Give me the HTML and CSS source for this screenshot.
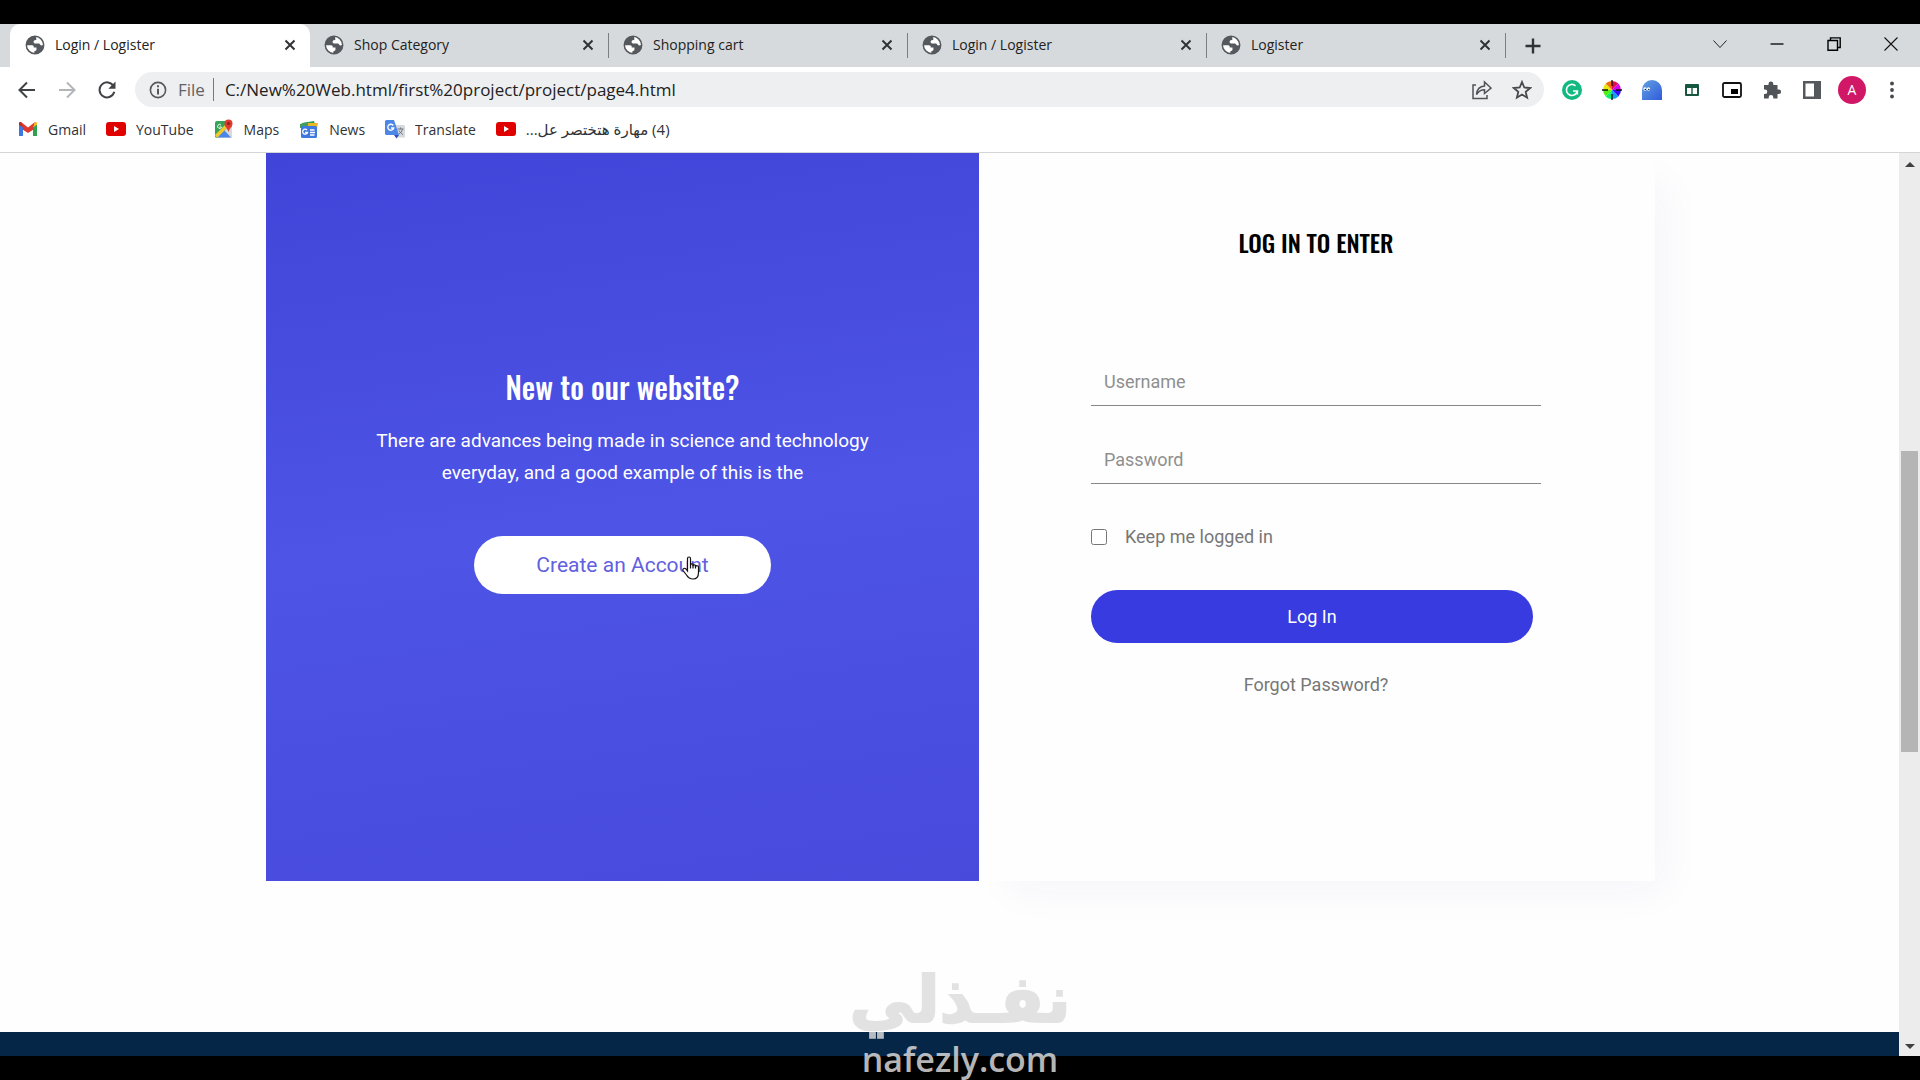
FILE: index.html
```html
<!DOCTYPE html>
<html lang="en">
<head>
    <meta charset="UTF-8">
    <meta name="viewport" content="width=device-width, initial-scale=1.0">
    <title>Login / Logister</title>
    <link rel="stylesheet" href="styles.css">
</head>
<body>
    <!-- shared icon shapes -->
    <svg class="defs" width="0" height="0">
        <symbol id="globe" viewBox="0 0 20 20">
            <circle cx="10" cy="10" r="8.7" fill="#fff" stroke="#55585c" stroke-width="1.5"/>
            <path d="M11 1.3C5.500 0.800 1.200 5 1.300 10.300L7 10.200C8.500 10.300 9 11.400 8.700 12.500L11.500 12.600L11.400 15.200L9.300 16.500L9.200 18.700C14.500 18.900 18.700 15 18.700 10L16 10.600L14.200 8.400L10.500 8.500C8.300 8.300 8 6 9.700 5.200L11.400 4.800Z" fill="#55585c"/>
        </symbol>
        <symbol id="close" viewBox="0 0 12 12">
            <path d="M1.500 1.500L10.500 10.500M10.500 1.500L1.500 10.500" stroke="#303236" stroke-width="2"/>
        </symbol>
        <symbol id="youtube" viewBox="0 0 20 20">
            <rect y="3" width="20" height="14" rx="3" fill="#e00000"/>
            <path d="M8 7L13 10L8 13Z" fill="#fff"/>
        </symbol>
    </svg>

    <div class="window">
        <header class="browser">
            <div class="tab-bar">
                <div class="tab active">
                    <svg class="favicon"><use href="#globe"/></svg>
                    <span>Login / Logister</span>
                    <button class="close" aria-label="Close tab"><svg><use href="#close"/></svg></button>
                </div>
                <div class="tab">
                    <svg class="favicon"><use href="#globe"/></svg>
                    <span>Shop Category</span>
                    <button class="close" aria-label="Close tab"><svg><use href="#close"/></svg></button>
                </div>
                <div class="tab">
                    <svg class="favicon"><use href="#globe"/></svg>
                    <span>Shopping cart</span>
                    <button class="close" aria-label="Close tab"><svg><use href="#close"/></svg></button>
                </div>
                <div class="tab">
                    <svg class="favicon"><use href="#globe"/></svg>
                    <span>Login / Logister</span>
                    <button class="close" aria-label="Close tab"><svg><use href="#close"/></svg></button>
                </div>
                <div class="tab">
                    <svg class="favicon"><use href="#globe"/></svg>
                    <span>Logister</span>
                    <button class="close" aria-label="Close tab"><svg><use href="#close"/></svg></button>
                </div>
                <button class="new-tab" aria-label="New tab">
                    <svg width="16" height="16" viewBox="0 0 16 16"><path d="M8 0.500V15.500M0.500 8H15.500" stroke="#303236" stroke-width="2.4"/></svg>
                </button>
                <div class="window-buttons">
                    <button aria-label="Search tabs"><svg width="14" height="14" viewBox="0 0 14 14"><path d="M0.500 3.500L7 10.500L13.500 3.500" fill="none" stroke="#222"/></svg></button>
                    <button aria-label="Minimize"><svg width="14" height="14" viewBox="0 0 14 14"><path d="M0.500 7H13.500" stroke="#000" stroke-width="1.300"/></svg></button>
                    <button aria-label="Restore"><svg width="14" height="14" viewBox="0 0 14 14"><path d="M1 3.500H10.500V13.300H1ZM3.500 3.500V0.900H13.200V10.500H10.500" fill="none" stroke="#000" stroke-width="1.400"/></svg></button>
                    <button aria-label="Close"><svg width="14" height="14" viewBox="0 0 14 14"><path d="M0.500 0.500L13.500 13.500M13.500 0.500L0.500 13.500" stroke="#111" stroke-width="1.100"/></svg></button>
                </div>
            </div>

            <div class="toolbar">
                <button aria-label="Back"><svg width="18" height="18" viewBox="0 0 18 18"><path d="M17 9H2M9 1.500L1.500 9L9 16.500" fill="none" stroke="#404246" stroke-width="2"/></svg></button>
                <button aria-label="Forward"><svg width="18" height="18" viewBox="0 0 18 18"><path d="M1 9H16M9 1.500L16.500 9L9 16.500" fill="none" stroke="#b3b5b8" stroke-width="2"/></svg></button>
                <button aria-label="Reload"><svg width="18" height="18" viewBox="0 0 18 18"><path d="M15.500 5A7.500 7.500 0 1 0 16.300 10.800" fill="none" stroke="#404246" stroke-width="2"/><path d="M17.500 0.500V7.700H10.300Z" fill="#404246"/></svg></button>
                <div class="omnibox">
                    <svg width="18" height="18" viewBox="0 0 18 18"><circle cx="9" cy="9" r="7.600" fill="none" stroke="#55585c" stroke-width="1.600"/><path d="M9 4.300V6.300M9 7.700V13.500" stroke="#55585c" stroke-width="2"/></svg>
                    <label for="address">File</label>
                    <input type="text" id="address" value="C:/New%20Web.html/first%20project/project/page4.html">
                    <button aria-label="Share"><svg width="20" height="20" viewBox="0 0 20 20"><path d="M4 5H1V18.500H15V15M4.500 14.500C5 9 8 6.300 12.500 6V2L19 8L12.500 13.500V9.800C9 9.800 6.500 11.500 4.500 14.500Z" fill="none" stroke="#505357" stroke-width="1.500"/></svg></button>
                    <button aria-label="Bookmark this tab"><svg width="20" height="20" viewBox="0 0 20 20"><path d="M10 2L12.300 7.500L18.200 8L13.700 11.900L15.100 17.700L10 14.600L4.900 17.700L6.300 11.900L1.800 8L7.700 7.500Z" fill="none" stroke="#46494d" stroke-width="1.800"/></svg></button>
                </div>
                <div class="extensions">
                    <button aria-label="Grammarly"><svg width="20" height="20" viewBox="0 0 20 20"><circle cx="10" cy="10" r="10" fill="#12b981"/><path d="M13.500 5.800A5.500 5.500 0 1 0 15.300 11H11M15.300 11V14.500" fill="none" stroke="#fff" stroke-width="1.700"/></svg></button>
                    <button aria-label="Color picker">
                        <svg width="20" height="20" viewBox="0 0 20 20">
                            <path d="M10 10V1A9 9 0 0 1 16.400 3.600Z" fill="#e0104a"/><path d="M10 10L16.400 3.600A9 9 0 0 1 19 10Z" fill="#d400f0"/>
                            <path d="M10 10H19A9 9 0 0 1 16.400 16.400Z" fill="#3010ff"/><path d="M10 10L16.400 16.400A9 9 0 0 1 10 19Z" fill="#10a0f0"/>
                            <path d="M10 10V19A9 9 0 0 1 3.600 16.400Z" fill="#10f070"/><path d="M10 10L3.600 16.400A9 9 0 0 1 1 10Z" fill="#50f010"/>
                            <path d="M10 10H1A9 9 0 0 1 3.600 3.600Z" fill="#e8e810"/><path d="M10 10L3.600 3.600A9 9 0 0 1 10 1Z" fill="#f07010"/>
                            <path d="M10 0V6M10 14V20M0 10H6M14 10H20" stroke="#111" stroke-width="1.300"/>
                        </svg>
                    </button>
                    <button aria-label="Ghost"><svg width="22" height="20" viewBox="0 0 22 20"><defs><linearGradient id="ghost" x1="0" y1="0" x2="1" y2="1"><stop offset="0" stop-color="#61a2e0"/><stop offset="1" stop-color="#315bdc"/></linearGradient></defs><path d="M1 20V10A10 10 0 0 1 21 10V20Z" fill="url(#ghost)"/><circle cx="4" cy="9" r="1.700" fill="#fff"/><circle cx="7.500" cy="9" r="1.700" fill="#fff"/><circle cx="4.300" cy="9.400" r="0.700"/><circle cx="7.800" cy="9.400" r="0.700"/></svg></button>
                    <button aria-label="Columns"><svg width="14" height="12" viewBox="0 0 14 12"><rect width="14" height="12" rx="1" fill="#17573f"/><path d="M2 4H6.300V10H2ZM7.700 4H12V10H7.700Z" fill="#fff"/></svg></button>
                    <button aria-label="Picture in picture"><svg width="20" height="16" viewBox="0 0 20 16"><rect x="1" y="1" width="18" height="14" rx="1.500" fill="#fff" stroke="#111" stroke-width="1.800"/><rect x="9" y="7" width="7" height="5" fill="#000"/></svg></button>
                    <button aria-label="Extensions"><svg width="20" height="20" viewBox="0 0 20 20"><path d="M2 5H6.500V4A2.400 2.400 0 0 1 11.300 4V5H15.500V9.500H16.800A2.300 2.300 0 0 1 16.800 14.100H15.500V18.500H11.300V17.300A2.300 2.300 0 0 0 6.700 17.300V18.500H2V14H3A2.300 2.300 0 0 0 3 9.400H2Z" fill="#505357"/></svg></button>
                    <button aria-label="Side panel"><svg width="18" height="18" viewBox="0 0 18 18"><path d="M0 0H18V18H0ZM2.500 2.500V15.500H11V2.500Z" fill="#55585c" fill-rule="evenodd"/></svg></button>
                    <button class="avatar">A</button>
                    <button aria-label="Menu"><svg width="4" height="18" viewBox="0 0 4 18"><circle cx="2" cy="2.500" r="1.900" fill="#46494d"/><circle cx="2" cy="9" r="1.900" fill="#46494d"/><circle cx="2" cy="15.500" r="1.900" fill="#46494d"/></svg></button>
                </div>
            </div>

            <nav class="bookmarks">
                <a href="#"><svg viewBox="0 0 20 20"><path d="M1 17V5L5 8V17Z" fill="#3f78e0"/><path d="M15 17V8L19 5V17Z" fill="#2fa24f"/><path d="M1 5.500V3.500L3 3L10 8.500L17 3L15 11L10 14L5 11V8.500Z" fill="#df3a30"/><path d="M15 8.500L17 3L19 3.500V5.500Z" fill="#f5ba15"/><path d="M1 5.500V3.500L3 3L5 8.500Z" fill="#b92b25"/><path d="M5 11L10 14.500L15 11V17H5Z" fill="#fff"/></svg>Gmail</a>
                <a href="#"><svg><use href="#youtube"/></svg>YouTube</a>
                <a href="#"><svg viewBox="0 0 20 20"><rect x="1" y="2" width="17" height="17" rx="2" fill="#35a356"/><path d="M3 19L16 6L18 8V19Z" fill="#d7d9dd"/><path d="M2 18.500L10 11L17 18.500Z" fill="#4a86e8"/><path d="M1 16L12 5L14.500 7.500L3 19Z" fill="#f5c82b"/><path d="M14.500 13C13.500 9 10.500 8 10.500 4.500A4 4 0 0 1 18.500 4.500C18.500 8 15.500 9 14.500 13Z" fill="#df3a30"/><circle cx="14.500" cy="4.500" r="1.500" fill="#8c1f1b"/><path d="M7 6A2 2 0 1 0 7.500 8H5.500" fill="none" stroke="#fff"/></svg>Maps</a>
                <a href="#"><svg viewBox="0 0 20 20"><path d="M3 4L15 2L17 8L4 9Z" fill="#2f9c50"/><path d="M7 4H19L18 10H7Z" fill="#e8b82a"/><path d="M1 5L9 3V9H1Z" fill="#459c61"/><rect x="2" y="7" width="16" height="12" rx="1.500" fill="#3f79df"/><path d="M8 11A2.500 2.500 0 1 0 8.500 13.500H6M11 11H15.500M11 13.500H16M11 16H15.500" fill="none" stroke="#fff" stroke-width="1.300"/></svg>News</a>
                <a href="#"><svg viewBox="0 0 20 20"><path d="M8 6H18.500A1.500 1.500 0 0 1 20 7.500V18.500H11Z" fill="#d5d8dc"/><path d="M1.500 1H9L14 16H1.500A1.500 1.500 0 0 1 0 14.500V2.500A1.500 1.500 0 0 1 1.500 1Z" fill="#4c87e6"/><path d="M9 16H14L11.500 19.500Z" fill="#3250b8"/><path d="M8.300 6.500A3 3 0 1 0 8.700 9H6" fill="none" stroke="#fff" stroke-width="1.400"/><path d="M12.500 10H18.500M15.500 8.500V10M17.500 10C17 12.500 15.500 14 14 15M14 11.500C15 13.500 16.500 14.500 17.800 15.500" fill="none" stroke="#70767d"/></svg>Translate</a>
                <a href="#"><svg><use href="#youtube"/></svg><bdi class="arabic" dir="rtl" lang="ar">(4) مهارة هتختصر عل...</bdi></a>
            </nav>
        </header>

        <div class="viewport">
            <main class="page">
                <section class="login-area">
                    <div class="intro">
                        <h4>New to our website?</h4>
                        <p>There are advances being made in science and technology everyday, and a good example of this is the</p>
                        <a class="create" href="#">Create an Account
                            <svg class="cursor" width="18" height="24" viewBox="0 0 18 24"><path d="M5.500 13V2.500A1.500 1.500 0 0 1 8.500 2.500V9A1.400 1.400 0 0 1 11 8.500V10A1.400 1.400 0 0 1 13.500 9.500V11A1.400 1.400 0 0 1 16.500 11.500V16.500C16.500 20.500 14.500 23 11 23C7.500 23 6 21.500 4.500 19L1 14.500C0.500 12.500 2.500 11.500 4 13L5.500 15Z" fill="#fff" stroke="#111" stroke-width="1.200"/><path d="M8.500 8.500V12.500M11 9V12.500M13.500 10V12.500" stroke="#111" stroke-width="1.200"/></svg>
                        </a>
                    </div>
                    <form class="login-form">
                        <h3>LOG IN TO ENTER</h3>
                        <input type="text" class="field" aria-label="Username" placeholder="Username">
                        <input type="password" class="field" aria-label="Password" placeholder="Password">
                        <div class="keep">
                            <input type="checkbox" id="keep">
                            <label for="keep">Keep me logged in</label>
                        </div>
                        <button type="button" class="submit">Log In</button>
                        <a class="forgot" href="#">Forgot Password?</a>
                    </form>
                </section>
                <footer class="footer"></footer>
            </main>
            <div class="scrollbar">
                <svg width="10" height="5" viewBox="0 0 10 5"><path d="M0 5L5 0L10 5Z" fill="#404040"/></svg>
                <div class="track"><div class="thumb"></div></div>
                <svg width="10" height="5" viewBox="0 0 10 5"><path d="M0 0L5 5L10 0Z" fill="#404040"/></svg>
            </div>
        </div>
    </div>

    <div class="watermark">
        <span class="mark-ar" lang="ar" dir="rtl">نفـذلي</span>
        <span class="mark-en">nafezly.com</span>
    </div>
</body>
</html>
```
FILE: styles.css
```css
* { box-sizing: border-box; }
body { margin: 0; background: #000; font-family: Roboto, sans-serif; color: #222; overflow: hidden; }
button { border: none; background: none; padding: 0; font-family: inherit; cursor: pointer; }
a { text-decoration: none; }
.defs { position: absolute; }

.window { display: flex; flex-direction: column; height: 100vh; padding: 24px 0; }

/* browser chrome */
.browser { background: #fff; border-bottom: 1px solid #d4d5d7; font-family: "Open Sans", "DejaVu Sans", sans-serif; }
.tab-bar { display: flex; align-items: center; height: 43px; padding-left: 10px; background: #d6dadd; }
.tab { display: flex; align-items: center; flex: 0 1 299px; height: 25px; padding: 0 10px 2px 14px; font-size: 14px; border-right: 1px solid #7b7e82; }
.tab.active { flex-basis: 300px; height: 43px; padding-left: 15px; background: #fff; border: none; border-radius: 10px 10px 0 0; }
.favicon { width: 20px; height: 20px; margin-right: 10px; }
.close { display: flex; width: 20px; height: 20px; margin-left: auto; align-items: center; justify-content: center; }
.close svg { width: 12px; height: 12px; }
.new-tab { display: flex; margin-left: 19px; }
.window-buttons { display: flex; gap: 43px; margin-left: auto; padding: 0 22px 4px 0; }
.window-buttons button { display: flex; }

.toolbar { display: flex; align-items: center; height: 45px; padding: 0 14px 0 18px; gap: 22px; }
.toolbar button { display: flex; align-items: center; justify-content: center; }
.omnibox { display: flex; align-items: center; flex: 1; height: 35px; margin: 0 -8px 0 -3px; padding: 0 12px 0 14px; border-radius: 18px; background: #eeeff1; font-size: 17px; }
.omnibox label { margin-left: 11px; padding-right: 8px; border-right: 1px solid #77797d; color: #5f6368; }
.omnibox input { flex: 1; padding: 0 11px; border: none; outline: none; background: none; font: inherit; color: #222; }
.omnibox button { margin-left: 20px; }
.extensions { display: flex; align-items: center; gap: 12px; }
.extensions button { width: 28px; height: 28px; }
.extensions .avatar { border-radius: 50%; background: #d01866; color: #fff; font-size: 14px; }

.bookmarks { display: flex; align-items: center; height: 40px; gap: 20px; padding: 0 18px 6px; }
.bookmarks a { display: flex; align-items: center; gap: 10px; color: #303236; font-size: 14px; }
.bookmarks svg { width: 20px; height: 20px; }
.bookmarks .arabic { font-size: 15px; line-height: 20px; }

/* page */
.viewport { display: flex; flex: 1; min-height: 0; background: #fff; }
.page { display: flex; flex-direction: column; flex: 1; background: #fefefe; overflow: hidden; }
.login-area { display: flex; padding: 0 244px 0 266px; }
.intro { display: flex; flex-direction: column; align-items: center; flex: 1 1 713px; padding: 210px 100px 287px; text-align: center; color: #fff; background: linear-gradient(172deg, #4144d8, #4d54e6 50%, #484adc); }
.intro h4 { margin: 0; font: 500 30px/48px Oswald, "Liberation Sans Narrow", sans-serif; }
.intro p { margin: 14px 0 47px; font-size: 19px; line-height: 32px; }
.create { position: relative; padding: 0 62px; border-radius: 30px; background: #fff; color: #6260df; font-size: 21px; line-height: 58px; }
.cursor { position: absolute; left: 70%; top: 20px; }
.login-form { display: flex; flex-direction: column; flex: 1 1 676px; padding: 69px 114px 0 112px; background: #fefefe; box-shadow: 20px 20px 40px -10px #f5f5fb; clip-path: inset(0 -60px -60px 0); }
.login-form h3 { margin: 0 0 91px; font: 500 24px/40px Oswald, "Liberation Sans Narrow", sans-serif; color: #000; text-align: center; }
.field { height: 53px; margin-bottom: 25px; padding: 4px 13px 0; border: none; border-bottom: 1px solid #888; outline: none; background: none; font: 18px Roboto, sans-serif; }
.field::placeholder { color: #8f8f8f; }
.keep { display: flex; align-items: center; margin-top: 16px; line-height: 24px; color: #777; font-size: 18px; }
.keep input { width: 16px; height: 16px; margin: 0 18px 0 0; }
.submit { height: 53px; margin: 41px 8px 28px 0; border-radius: 27px; background: #373be0; color: #fff; font-size: 18px; }
.forgot { line-height: 28px; text-align: center; color: #777; font-size: 18px; }
.footer { height: 24px; margin-top: auto; background: #052646; }

.scrollbar { display: flex; flex-direction: column; align-items: center; width: 21px; padding: 9px 0 7px; background: #ececed; }
.track { display: flex; flex-direction: column; flex: 1; width: 17px; padding: 284px 0 292px; }
.thumb { flex: 1; background: #b5b5b5; }

/* watermark lies over the page */
.watermark { position: absolute; left: 50%; bottom: 0; display: flex; flex-direction: column; align-items: center; transform: translateX(-50%); color: #ddd; opacity: 0.82; white-space: nowrap; }
.mark-ar { font: bold 65px/76px "DejaVu Sans", sans-serif; -webkit-text-stroke: 2px #ddd; }
.mark-en { font: 600 34px/42px "Open Sans", sans-serif; }
```
